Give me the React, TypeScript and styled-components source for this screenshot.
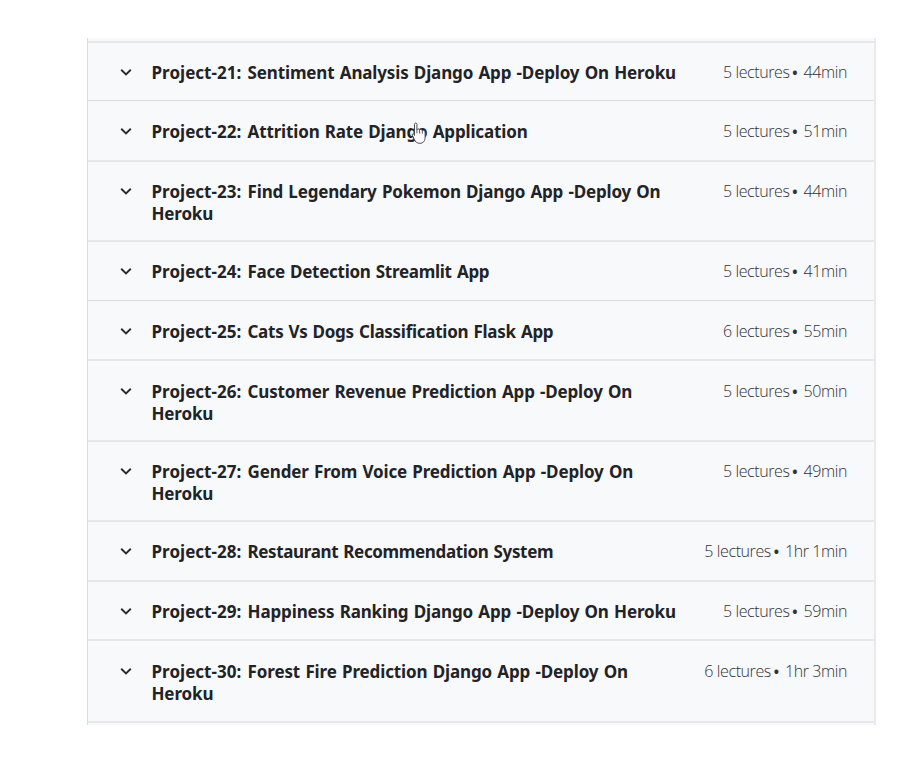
import React from "react";
import styled, { createGlobalStyle } from "styled-components";

const GlobalStyle = createGlobalStyle`
  * { box-sizing: border-box; }
  body { margin: 0; background: #fff; }
`;

const Page = styled.main`
  width: 921px;
  height: 759px;
  padding: 38px 0 0 87px;
  background: #fff;
  overflow: hidden;
  font-family: "Noto Sans", "Open Sans", sans-serif;
  color: #222326;
`;

const Panel = styled.div`
  width: 789px;
  height: 687px;
  padding-top: 3px;
  border-left: 1px solid #d9dbde;
  border-right: 2px solid #e9eaed;
  background: #f8f9fb;
`;

const Section = styled.section<{ $height: number; $soft: boolean; $drop: number }>`
  display: flex;
  align-items: flex-start;
  height: ${(p) => p.$height}px;
  padding: ${(p) => (p.$soft ? 19 : 20) + p.$drop}px 27px 0 32px;
  border-top: ${(p) => (p.$soft ? "2px solid #e6e7e9" : "1px solid #d9dbde")};
`;

const Chevron = styled.svg`
  flex: none;
  width: 12px;
  height: 8px;
  margin: 6px 19.5px 0 0;
`;

const Title = styled.h3<{ $spacing: number }>`
  flex: 1;
  margin: 0;
  font-size: 17px;
  font-weight: 700;
  line-height: 22px;
  letter-spacing: ${(p) => p.$spacing}px;
  word-spacing: 1px;
  white-space: nowrap;
`;

const Prefix = styled.span`
  margin-right: 1px;
  letter-spacing: 0.03px;
`;

const Meta = styled.span`
  flex: none;
  margin-top: -1px;
  font-family: "Open Sans", "Noto Sans", sans-serif;
  font-size: 16px;
  font-weight: 300;
  line-height: 22px;
  letter-spacing: -0.4px;
  color: #303236;
`;

const Bullet = styled.span`
  margin: 0 2.6px 0 -1px;
  font-size: 14px;
  font-weight: 700;
  line-height: 1;
`;

const Pointer = styled.svg`
  position: absolute;
  left: 411px;
  top: 122px;
  width: 16px;
  height: 23px;
`;

type Row = {
  project: number;
  lines: string[];
  lectures: string;
  time: string;
  height: number;
  spacing: number;
  soft?: boolean;
  drop?: number;
};

const rows: Row[] = [
  { project: 21, lines: ["Sentiment Analysis Django App -Deploy On Heroku"], lectures: "5 lectures", time: "44min", height: 59, spacing: -0.14 },
  { project: 22, lines: ["Attrition Rate Django Application"], lectures: "5 lectures", time: "51min", height: 60, soft: false, spacing: -0.155 },
  { project: 23, lines: ["Find Legendary Pokemon Django App -Deploy On", "Heroku"], lectures: "5 lectures", time: "44min", height: 80, spacing: -0.17 },
  { project: 24, lines: ["Face Detection Streamlit App"], lectures: "5 lectures", time: "41min", height: 60, spacing: -0.27 },
  { project: 25, lines: ["Cats Vs Dogs Classification Flask App"], lectures: "6 lectures", time: "55min", height: 59, soft: false, spacing: -0.27 },
  { project: 26, lines: ["Customer Revenue Prediction App -Deploy On", "Heroku"], lectures: "5 lectures", time: "50min", height: 81, drop: 1, spacing: -0.16 },
  { project: 27, lines: ["Gender From Voice Prediction App -Deploy On", "Heroku"], lectures: "5 lectures", time: "49min", height: 80, spacing: -0.15 },
  { project: 28, lines: ["Restaurant Recommendation System"], lectures: "5 lectures", time: "1hr 1min", height: 60, spacing: -0.35 },
  { project: 29, lines: ["Happiness Ranking Django App -Deploy On Heroku"], lectures: "5 lectures", time: "59min", height: 59, spacing: -0.14 },
  { project: 30, lines: ["Forest Fire Prediction Django App -Deploy On", "Heroku"], lectures: "6 lectures", time: "1hr 3min", height: 82, drop: 1, spacing: -0.13 },
];

const EndLine = styled.div`
  height: 2px;
  background: #e5e8eb;
`;

export default function App() {
  return (
    <Page>
      <GlobalStyle />
      <Panel>
        {rows.map((row) => (
          <Section key={row.project} $height={row.height} $soft={row.soft ?? true} $drop={row.drop ?? 0}>
            <Chevron viewBox="0 0 12 8" aria-hidden="true">
              <path d="M1.2 1.7 6 6.4 10.8 1.7" fill="none" stroke="#292a2e" strokeWidth="1.9" />
            </Chevron>
            <Title $spacing={row.spacing}>
              <Prefix>{`Project-${row.project}:`}</Prefix>{" "}
              {row.lines.map((line, i) => (
                <React.Fragment key={line}>
                  {i > 0 && <br />}
                  {line}
                </React.Fragment>
              ))}
            </Title>
            <Meta>
              {row.lectures} <Bullet>•</Bullet> {row.time}
            </Meta>
          </Section>
        ))}
        <EndLine />
      </Panel>
      <Pointer viewBox="0 0 16 23" aria-hidden="true">
        <path
          d="M3.5 13.5V2.4c0-1.9 2.4-1.9 2.4 0v5.2c.3-1.1 2.6-1 2.7.4.5-1 2.6-.7 2.7.7.7-.8 2.8-.3 2.8 1.2v5.3c0 3.7-1.9 6.1-5.3 6.1-2.9 0-4.4-1.5-5.6-4L1.4 13.2c-.5-1.4.9-2 1.6-1z"
          fill="#fff"
          stroke="#4a4a4d"
          strokeWidth="1"
          strokeLinejoin="round"
        />
        <path d="M5.9 7.5v3.8M8.6 8v3.5M11.3 8.7v3" stroke="#4a4a4d" strokeWidth=".9" fill="none" />
      </Pointer>
    </Page>
  );
}
